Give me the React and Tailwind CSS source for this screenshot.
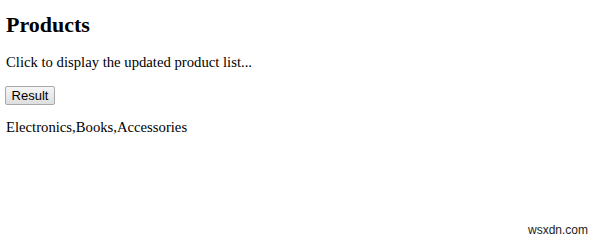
export default function App() {
  return (
    <div className="relative w-[600px] h-[240px] bg-white overflow-hidden text-black" style={{ fontFamily: '"Liberation Serif", "Times New Roman", serif' }}>
      <div className="flex flex-col items-start px-[5px]">
        <h1 className="mt-[12px] ml-[1px] text-[22px] leading-[25px] font-bold">Products</h1>
        <p className="mt-[17px] ml-[1px] text-[14.7px] leading-[17px]">Click to display the updated product list...</p>
        <button className="mt-[15px] w-[50px] h-[19px] border border-[#a8a8a8] rounded-[2px] bg-gradient-to-b from-[#f6f6f6] to-[#dedede] text-[13px] leading-[17px] text-black" style={{ fontFamily: '"Liberation Sans", Arial, sans-serif' }}>Result</button>
        <p className="mt-[14px] ml-[1px] text-[14.7px] leading-[17px]">Electronics,Books,Accessories</p>
      </div>
      <div className="absolute right-[12px] bottom-[3px] text-[12px] leading-[14px] text-[#222]" style={{ fontFamily: '"Liberation Sans", Arial, sans-serif' }}>wsxdn.com</div>
    </div>
  );
}
